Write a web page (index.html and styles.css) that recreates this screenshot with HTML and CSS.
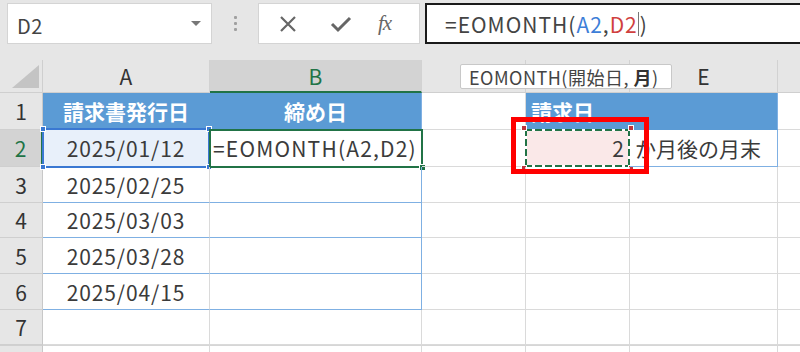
FILE: index.html
```html
<!DOCTYPE html>
<html lang="ja">
<head>
<meta charset="utf-8">
<link rel="stylesheet" href="styles.css">
</head>
<body>
<div class="app">
  <div class="fbar">
    <div class="namebox"><span class="nb-text">D2</span><span class="nb-caret"></span></div>
    <div class="grip"><i></i><i></i><i></i></div>
    <div class="btns">
      <svg class="ico" width="20" height="20" viewBox="0 0 20 20"><path d="M3 3 L17 17 M17 3 L3 17" stroke="#666" stroke-width="2.2" fill="none"/></svg>
      <svg class="ico" width="22" height="20" viewBox="0 0 22 20"><path d="M2 10 L8 16 L20 4" stroke="#666" stroke-width="3" fill="none" stroke-linejoin="miter"/></svg>
      <span class="fx">fx</span>
    </div>
    <div class="formula"><span>=EOMONTH(</span><span class="ref-a">A2</span><span>,</span><span class="ref-d">D2</span><span class="cursor"></span><span>)</span></div>
  </div>
  <div class="sheet">
    <div class="corner"><span class="tri"></span></div>
    <div class="ch">A</div>
    <div class="ch ch-sel">B</div>
    <div class="ch"></div>
    <div class="ch"></div>
    <div class="ch">E</div>
    <div class="ch ch-last"></div>

    <div class="rh">1</div>
    <div class="c hd center">請求書発行日</div>
    <div class="c hd center tb-r">締め日</div>
    <div class="c"></div>
    <div class="c hd">請求日</div>
    <div class="c hd tb-r"></div>
    <div class="c c-last"></div>

    <div class="rh rh-sel">2</div>
    <div class="c center tb-b a2 lat">2025/01/12<span class="a2-box"><i class="h tl"></i><i class="h tr"></i><i class="h bl"></i><i class="h br"></i></span></div>
    <div class="c tb-b tb-r b2 lat">=EOMONTH(A2,D2)<span class="b2-box"><i class="fill"></i></span></div>
    <div class="c"></div>
    <div class="c right tb-b d2">2<span class="d2-box"><i class="h tl"></i><i class="h tr"></i><i class="h bl"></i><i class="h br"></i></span></div>
    <div class="c tb-b tb-r e2">か月後の月末</div>
    <div class="c c-last"></div>

    <div class="rh">3</div>
    <div class="c center tb-b lat">2025/02/25</div>
    <div class="c tb-b tb-r"></div>
    <div class="c"></div><div class="c"></div><div class="c"></div><div class="c c-last"></div>

    <div class="rh">4</div>
    <div class="c center tb-b lat">2025/03/03</div>
    <div class="c tb-b tb-r"></div>
    <div class="c"></div><div class="c"></div><div class="c"></div><div class="c c-last"></div>

    <div class="rh">5</div>
    <div class="c center tb-b lat">2025/03/28</div>
    <div class="c tb-b tb-r"></div>
    <div class="c"></div><div class="c"></div><div class="c"></div><div class="c c-last"></div>

    <div class="rh">6</div>
    <div class="c center tb-b lat">2025/04/15</div>
    <div class="c tb-b tb-r"></div>
    <div class="c"></div><div class="c"></div><div class="c"></div><div class="c c-last"></div>

    <div class="rh">7</div>
    <div class="c"></div><div class="c"></div><div class="c"></div><div class="c"></div><div class="c"></div><div class="c c-last"></div>

    <div class="rh rh-8"></div>
    <div class="c r8"></div><div class="c r8"></div><div class="c r8"></div><div class="c r8"></div><div class="c r8"></div><div class="c c-last r8"></div>

    <div class="tooltip">EOMONTH(開始日, <b>月</b>)</div>
    <div class="redbox"></div>
  </div>
</div>
</body>
</html>
```
FILE: styles.css
```css
* { box-sizing: border-box; }
html, body { margin: 0; padding: 0; }
body {
  width: 800px;
  height: 352px;
  overflow: hidden;
  background: #e6e6e6;
  font-family: "Noto Sans CJK JP", "Noto Sans", sans-serif;
  color: #3b3b3b;
}
.app { width: 800px; height: 352px; overflow: hidden; }

.fbar {
  height: 60px;
  display: flex;
  align-items: flex-start;
  padding-top: 3px;
  background: #e6e6e6;
}
.namebox {
  margin-left: 7px;
  width: 205px;
  height: 41px;
  background: #fff;
  border: 1px solid #d4d4d4;
  display: flex;
  align-items: center;
  justify-content: space-between;
  padding: 0 10px 0 9px;
}
.nb-text { font-size: 20px; color: #444; line-height: 1; padding-top: 5px; letter-spacing: 0.5px; }
.nb-caret {
  width: 0; height: 0;
  border-left: 5px solid transparent;
  border-right: 5px solid transparent;
  border-top: 5px solid #777;
}
.grip {
  width: 46px;
  height: 41px;
  display: flex;
  flex-direction: column;
  align-items: center;
  justify-content: center;
  gap: 3px;
}
.grip i { display: block; width: 3px; height: 3px; background: #a0a0a0; border-radius: 1px; }
.btns {
  width: 162px;
  height: 41px;
  background: #fff;
  border: 1px solid #d4d4d4;
  display: flex;
  align-items: center;
  padding-left: 19px;
}
.btns .ico:nth-child(1) { margin-right: 32px; }
.btns .ico:nth-child(2) { margin-right: 26px; }
.fx {
  font-family: "Liberation Serif", serif;
  font-style: italic;
  font-size: 21px;
  color: #666;
  letter-spacing: -1px;
}
.formula {
  margin-left: 5px;
  flex: 1;
  height: 41px;
  background: #fff;
  border: 2px solid #1a1a1a;
  border-right: none;
  display: flex;
  align-items: center;
  padding-left: 18px;
  font-size: 21px;
  letter-spacing: 1px;
  color: #444;
  white-space: pre;
}
.ref-a { color: #3d7ed8; }
.ref-d { color: #d0403e; }
.cursor { display: inline-block; width: 1px; height: 24px; background: #777; margin: 0 1px 0 0; }

.sheet {
  position: relative;
  display: grid;
  grid-template-columns: 43px 167px 212px 104px 104px 148px 22px;
  grid-template-rows: 33px 37px 37px 36px 35px 36px 36px 35px 7px;
  background: #fff;
}
.corner {
  background: #e6e6e6;
  border-right: 1px solid #cfcfcf;
  border-bottom: 1px solid #cfcfcf;
  position: relative;
}
.tri {
  position: absolute;
  right: 3px;
  bottom: 4px;
  width: 0; height: 0;
  border-left: 27px solid transparent;
  border-bottom: 23px solid #c4c4c4;
}
.ch {
  background: #e6e6e6;
  border-right: 1px solid #d2d2d2;
  border-bottom: 1px solid #cfcfcf;
  display: flex;
  align-items: center;
  justify-content: center;
  font-size: 21px;
  color: #333;
}
.ch-sel { background: #d3d3d3; border-bottom: 2px solid #217346; color: #217346; }
.ch-last { border-right: none; }
.rh {
  background: #e6e6e6;
  border-right: 1px solid #c8c8c8;
  border-bottom: 1px solid #cfcfcf;
  display: flex;
  align-items: center;
  justify-content: center;
  font-size: 21px;
  color: #333;
}
.rh-sel { background: #d3d3d3; border-right: 2px solid #217346; color: #217346; }
.rh-8 { border-bottom: none; border-top: 1px solid #d0d0d0; }

.c {
  border-right: 1px solid #dadada;
  border-bottom: 1px solid #dadada;
  display: flex;
  align-items: center;
  font-size: 21px;
  color: #3b3b3b;
  padding: 0 5px;
  white-space: nowrap;
  position: relative;
}
.lat { letter-spacing: 0.9px; }
.c-last { border-right: none; }
.r8 { border-bottom: none; border-top: 1px solid #d6d6d6; }
.center { justify-content: center; }
.right { justify-content: flex-end; }
.hd { background: #5b9bd5; color: #fff; font-weight: 700; border-bottom-color: #5b9bd5; border-right-color: #5b9bd5; }
.tb-b { border-bottom: 1px solid #7fb0e3; }
.tb-r { border-right: 1px solid #7fb0e3; }

.a2 { background: #e8f0fa; }
.a2-box {
  position: absolute;
  left: -1px; top: -2px; right: -1px; bottom: -2px;
  border: 2px solid #3a78d2;
}
.a2-box .h { background: #3a78d2; }
.h {
  position: absolute;
  width: 6px; height: 6px;
  border: 1px solid #fff;
}
.h.tl { left: -4px; top: -4px; }
.h.tr { right: -4px; top: -4px; }
.h.bl { left: -4px; bottom: -4px; }
.h.br { right: -4px; bottom: -4px; }

.b2 { padding-left: 3px; letter-spacing: 1.2px; }
.b2-box {
  position: absolute;
  left: -1px; top: -1px; right: -2px; bottom: -2px;
  border: 2px solid #217346;
}
.b2-box .fill {
  position: absolute;
  right: -5px; bottom: -5px;
  width: 7px; height: 7px;
  background: #217346;
  border: 1px solid #fff;
}

.d2 { background: #fae8e8; padding-right: 5px; }
.d2-box {
  position: absolute;
  left: -1px; top: -1px; right: -1px; bottom: -1px;
  background:
    repeating-linear-gradient(90deg, #217346 0 7px, #fff 7px 10px) left top / 100% 2px no-repeat,
    repeating-linear-gradient(90deg, #217346 0 7px, #fff 7px 10px) left bottom / 100% 2px no-repeat,
    repeating-linear-gradient(180deg, #217346 0 7px, #fff 7px 10px) left top / 2px 100% no-repeat,
    repeating-linear-gradient(180deg, #217346 0 7px, #fff 7px 10px) right top / 2px 100% no-repeat;
}
.d2-box .h { background: #c0343c; }
.e2 { padding-left: 5px; }

.tooltip {
  position: absolute;
  left: 460px;
  top: 4px;
  width: 212px;
  height: 25px;
  background: #fff;
  border: 1px solid #c8c8c8;
  border-radius: 2px;
  font-size: 18px;
  letter-spacing: 0.5px;
  color: #444;
  display: flex;
  align-items: center;
  padding-left: 8px;
  white-space: pre;
}
.tooltip b { font-weight: 700; color: #333; }
.redbox {
  position: absolute;
  left: 511px;
  top: 57px;
  width: 138px;
  height: 57px;
  border: 5px solid #ff0000;
}
```
